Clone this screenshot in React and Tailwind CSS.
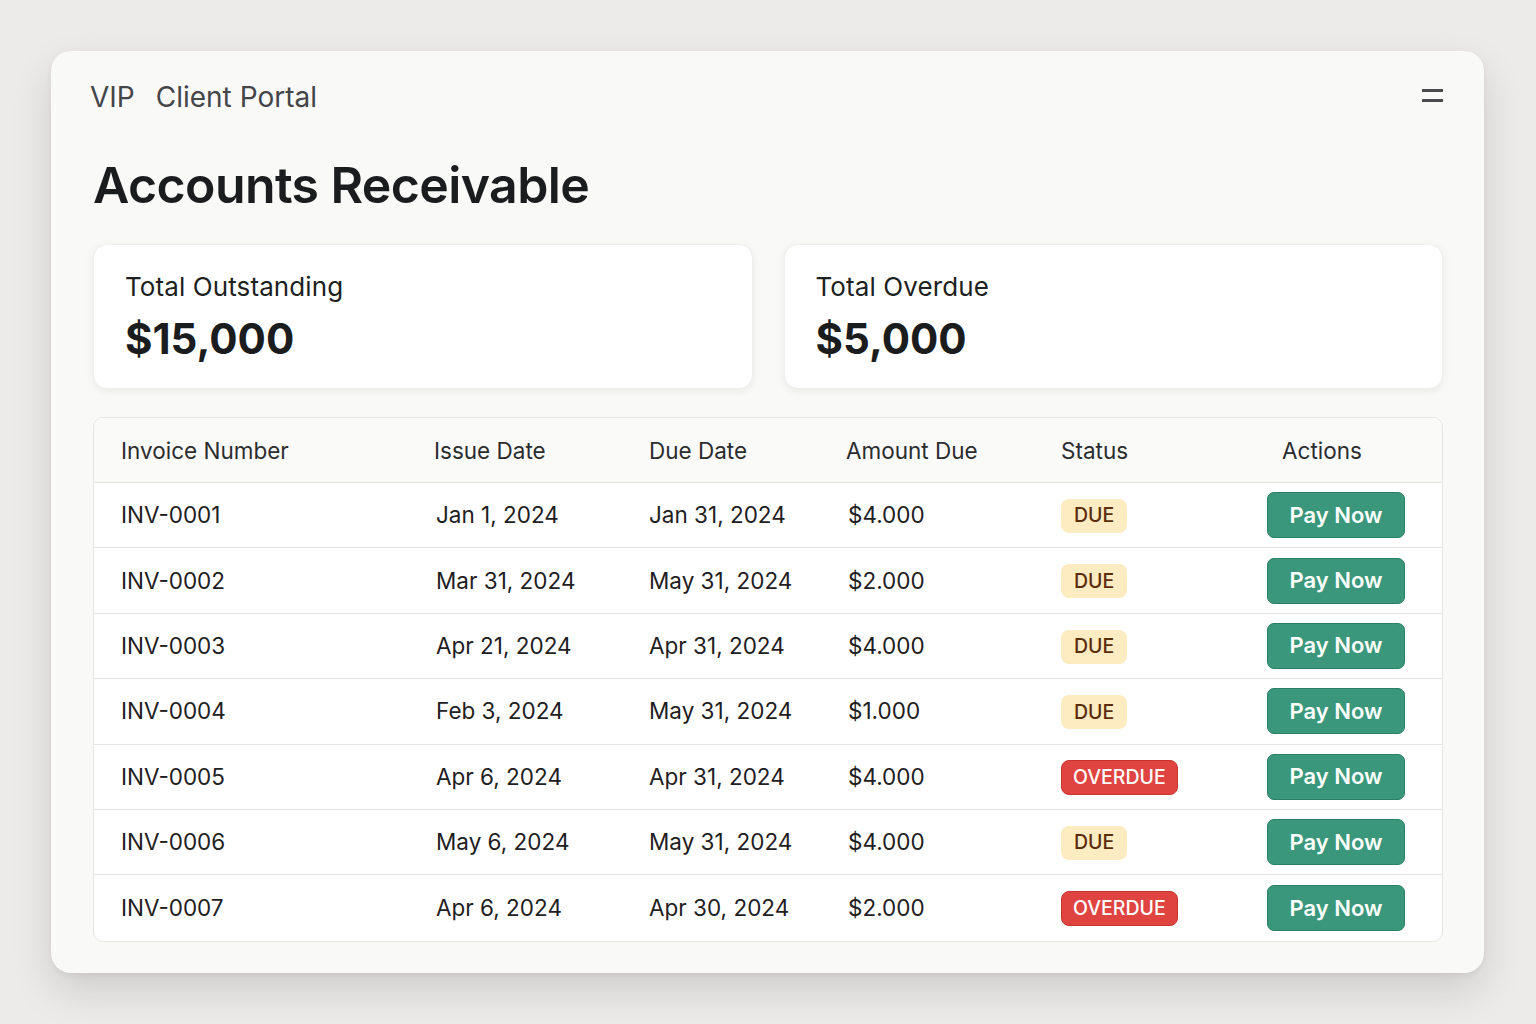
import React from "react";

const rows = [
  ["INV-0001", "Jan 1, 2024", "Jan 31, 2024", "$4.000", "DUE"],
  ["INV-0002", "Mar 31, 2024", "May 31, 2024", "$2.000", "DUE"],
  ["INV-0003", "Apr 21, 2024", "Apr 31, 2024", "$4.000", "DUE"],
  ["INV-0004", "Feb 3, 2024", "May 31, 2024", "$1.000", "DUE"],
  ["INV-0005", "Apr 6, 2024", "Apr 31, 2024", "$4.000", "OVERDUE"],
  ["INV-0006", "May 6, 2024", "May 31, 2024", "$4.000", "DUE"],
  ["INV-0007", "Apr 6, 2024", "Apr 30, 2024", "$2.000", "OVERDUE"],
];

const cols = "grid grid-cols-[313px_215px_197px_215px_206px_1fr] items-center pl-[27px]";

function Badge({ s }) {
  if (s === "OVERDUE")
    return (
      <span className="inline-flex h-[35px] items-center rounded-[8px] border border-[#c8322f] bg-[#e04441] px-[11px] text-[19.5px] font-medium text-white">
        OVERDUE
      </span>
    );
  return (
    <span className="inline-flex h-[34px] items-center rounded-[8px] bg-[#fdebc2] px-[13px] text-[19.5px] font-medium text-[#5b2c0a]">
      DUE
    </span>
  );
}

export default function App() {
  return (
    <div
      className="min-h-[1024px] w-full bg-[#ecebe9] pt-[51px] pl-[51px]"
      style={{ fontFamily: "Inter, 'Noto Sans', sans-serif" }}
    >
      <div className="w-[1433px] h-[922px] rounded-[20px] bg-[#f9f9f8] shadow-[0_18px_40px_rgba(0,0,0,0.13),0_2px_6px_rgba(0,0,0,0.05)] pl-[42px] pr-[41px] pt-[25px]">
        <div className="flex items-center justify-between">
          <div className="flex items-center gap-[21px] text-[28px] text-[#444548] ml-[-3px]">
            <span>VIP</span>
            <span>Client Portal</span>
          </div>
          <div className="mt-[-4px] flex flex-col gap-[7px]">
            <div className="h-[3px] w-[21px] bg-[#4a4a4c]" />
            <div className="h-[3px] w-[21px] bg-[#4a4a4c]" />
          </div>
        </div>
        <h1 className="mt-[42px] text-[50px] font-semibold tracking-[-0.6px] text-[#1b1c1e] leading-none">
          Accounts Receivable
        </h1>
        <div className="mt-[34px] grid grid-cols-2 gap-[31px]">
          {[
            ["Total Outstanding", "$15,000"],
            ["Total Overdue", "$5,000"],
          ].map(([l, v]) => (
            <div
              key={l}
              className="h-[145px] rounded-[14px] bg-white pl-[31px] pt-[29px] shadow-[0_2px_8px_rgba(0,0,0,0.07)] border border-[#efefed]"
            >
              <div className="text-[26px] tracking-[0.1px] text-[#1e1f21] leading-none">{l}</div>
              <div className="mt-[18px] text-[42px] font-bold text-[#1b1c1e] leading-none">{v}</div>
            </div>
          ))}
        </div>
        <div className="mt-[28px] overflow-hidden rounded-[10px] border border-[#e6e6e4] bg-white">
          <div className={`${cols} h-[65px] border-b border-[#e4e4e2] bg-[#fafaf9] pt-[2px] text-[22.5px] text-[#2b2c2e]`}>
            <span>Invoice Number</span>
            <span>Issue Date</span>
            <span>Due Date</span>
            <span>Amount Due</span>
            <span>Status</span>
            <span className="pl-[15px]">Actions</span>
          </div>
          {rows.map((r, i) => (
            <div
              key={r[0]}
              className={`${cols} h-[65.4px] text-[22.5px] text-[#1f2022] ${i < rows.length - 1 ? "border-b border-[#e4e4e2]" : ""}`}
            >
              <span>{r[0]}</span>
              <span className="pl-[2px]">{r[1]}</span>
              <span>{r[2]}</span>
              <span className="pl-[2px]">{r[3]}</span>
              <span>
                <Badge s={r[4]} />
              </span>
              <span>
                <button className="h-[46px] w-[138px] rounded-[7px] border border-[#2b7f64] bg-[#3a977b] text-[22px] font-semibold text-white">
                  Pay Now
                </button>
              </span>
            </div>
          ))}
        </div>
      </div>
    </div>
  );
}
